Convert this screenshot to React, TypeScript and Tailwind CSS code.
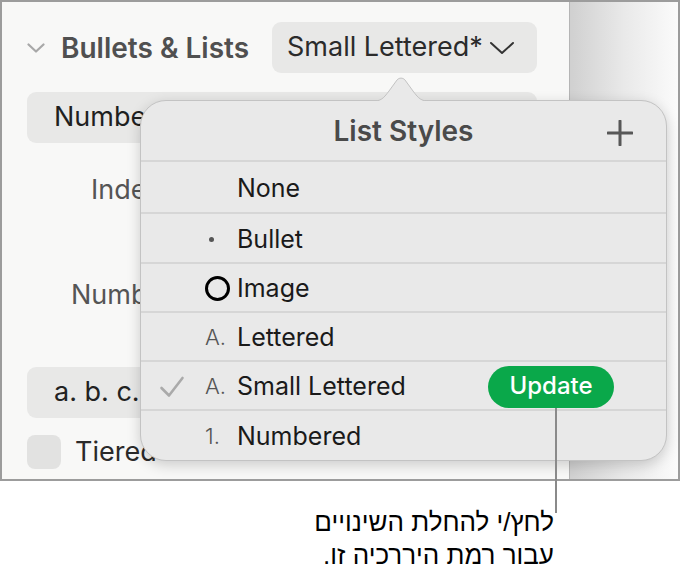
import React from "react";

const ui = { fontFamily: 'Inter, "Noto Sans", sans-serif' };
const heb = { fontFamily: '"Liberation Sans", "DejaVu Sans", sans-serif' };

function Row({
  icon,
  label,
  check,
  update,
  last,
  h,
}: {
  icon?: React.ReactNode;
  label: string;
  check?: boolean;
  update?: boolean;
  last?: boolean;
  h: string;
}) {
  return (
    <div
      className={
        "relative flex items-center pt-[2px] " +
        h +
        (last ? "" : " border-b-2 border-[#d6d6d6]")
      }
    >
      <div className="flex w-[26px] ml-[18px] justify-center">
        {check && (
          <svg width="26" height="24" viewBox="0 0 26 24">
            <path
              d="M2.5 13 L10 20.5 L23.5 3"
              fill="none"
              stroke="#aaaaaa"
              strokeWidth="2.6"
              strokeLinecap="round"
              strokeLinejoin="round"
            />
          </svg>
        )}
      </div>
      <div className="flex w-[32px] ml-[20px] items-center">{icon}</div>
      <span className="text-[25px] text-[#1a1a1a] leading-none">{label}</span>
      {update && (
        <div className="ml-auto mr-[52px] flex h-[42px] w-[126px] items-center justify-center rounded-full bg-[#0aa84a] pb-[1px] text-[24px] font-medium text-white">
          Update
        </div>
      )}
    </div>
  );
}

export default function App() {
  return (
    <div className="relative h-[569px] w-[681px] overflow-hidden bg-white" style={ui}>
      {/* screenshot frame */}
      <div className="flex h-[481px] w-[680px] border-2 border-[#9c9c9c]">
        {/* left pane */}
        <div className="w-[567px] bg-[#f8f8f7] pl-[25px] pr-[32px] pt-[20px]">
          <div className="flex h-[51px] items-center">
            <svg width="18" height="12" viewBox="0 0 18 12">
              <path
                d="M1.5 2.5 L9 9.5 L16.5 2.5"
                fill="none"
                stroke="#a8a8a8"
                strokeWidth="2.2"
                strokeLinecap="round"
                strokeLinejoin="round"
              />
            </svg>
            <span className="ml-[16px] text-[28px] font-semibold text-[#505050]">
              Bullets &amp; Lists
            </span>
            <div className="ml-auto flex h-[51px] w-[265px] items-center rounded-[9px] bg-[#e8e8e7] pl-[15px]">
              <span className="text-[27px] text-[#2b2b2b]">Small Lettered*</span>
              <svg width="26" height="14" viewBox="0 0 26 14" className="ml-[6px]">
                <path
                  d="M2 2 L13 12 L24 2"
                  fill="none"
                  stroke="#333"
                  strokeWidth="2"
                  strokeLinecap="round"
                  strokeLinejoin="round"
                />
              </svg>
            </div>
          </div>
          <div className="mt-[19px] flex h-[51px] items-center rounded-[9px] bg-[#e8e8e7] pl-[27px]">
            <span className="text-[27px] text-[#1f1f1f]">Numbered</span>
          </div>
          <div className="mt-[27px] flex h-[40px] items-center pl-[64px] text-[27px] text-[#555]">
            Indent
          </div>
          <div className="mt-[65px] flex h-[40px] items-center pl-[44px] text-[27px] text-[#555]">
            Number
          </div>
          <div className="mt-[52px] flex h-[51px] w-[220px] items-center rounded-[9px] bg-[#e8e8e7] pl-[27px]">
            <span className="text-[27px] text-[#222]">a. b. c.</span>
          </div>
          <div className="mt-[17px] flex h-[34px] items-center">
            <div className="h-[34px] w-[34px] rounded-[8px] bg-[#e2e2e1]" />
            <span className="ml-[14px] text-[27px] text-[#2a2a2a]">Tiered Numbers</span>
          </div>
        </div>
        {/* divider */}
        <div className="w-[1px] bg-[#b5b5b5]" />
        {/* right pane */}
        <div className="flex-1 bg-gradient-to-r from-[#d0d0d0] via-[#e9e9e9] to-[#fbfbfb]" />
      </div>

      {/* popover */}
      <div className="absolute left-[140px] top-[100px] w-[527px] rounded-[26px] border border-[#c3c3c3] bg-[#e9e9e9] shadow-[0_4px_14px_rgba(0,0,0,0.18)]">
        <svg
          width="64"
          height="25"
          viewBox="0 0 64 25"
          className="absolute left-[228px] top-[-24px]"
        >
          <path
            d="M0 24.5 C12 24.5 14 22 20 14 L28 3 C30 0.5 34 0.5 36 3 L44 14 C50 22 52 24.5 64 24.5"
            fill="#e9e9e9"
            stroke="#c3c3c3"
            strokeWidth="1"
          />
          <rect x="0" y="24" width="64" height="2" fill="#e9e9e9" />
        </svg>
        <div className="relative flex h-[61px] items-center justify-center border-b-2 border-[#d6d6d6]">
          <span className="text-[28px] font-semibold text-[#4a4a4a]">List Styles</span>
          <svg
            width="26"
            height="26"
            viewBox="0 0 26 26"
            className="absolute right-[33px] top-[19px]"
          >
            <path d="M13 1 V25 M1 13 H25" stroke="#575757" strokeWidth="3" strokeLinecap="round" />
          </svg>
        </div>
        <Row h="h-[52px]" label="None" />
        <Row
          h="h-[50px]"
          label="Bullet"
          icon={<div className="ml-[4px] h-[5px] w-[5px] rounded-full bg-[#555]" />}
        />
        <Row
          h="h-[49px]"
          label="Image"
          icon={<div className="h-[25px] w-[25px] rounded-full border-[3.5px] border-black" />}
        />
        <Row
          h="h-[49px]"
          label="Lettered"
          icon={<span className="text-[22px] font-light text-[#555]">A.</span>}
        />
        <Row
          h="h-[49px]"
          label="Small Lettered"
          check
          update
          icon={<span className="text-[22px] font-light text-[#555]">A.</span>}
        />
        <Row
          h="h-[49px]"
          label="Numbered"
          last
          icon={<span className="text-[22px] font-light text-[#555]">1.</span>}
        />
      </div>

      {/* callout line */}
      <div className="absolute left-[555px] top-[408px] h-[105px] w-[2px] bg-[#8a8a8a]" />

      {/* callout text */}
      <div
        dir="rtl"
        className="absolute left-[280px] top-[509px] flex w-[274px] flex-col gap-[7px] text-right text-[26px] leading-[26px] text-black"
        style={heb}
      >
        <div>לחץ/י להחלת השינויים</div>
        <div>עבור רמת היררכיה זו.</div>
      </div>
    </div>
  );
}
